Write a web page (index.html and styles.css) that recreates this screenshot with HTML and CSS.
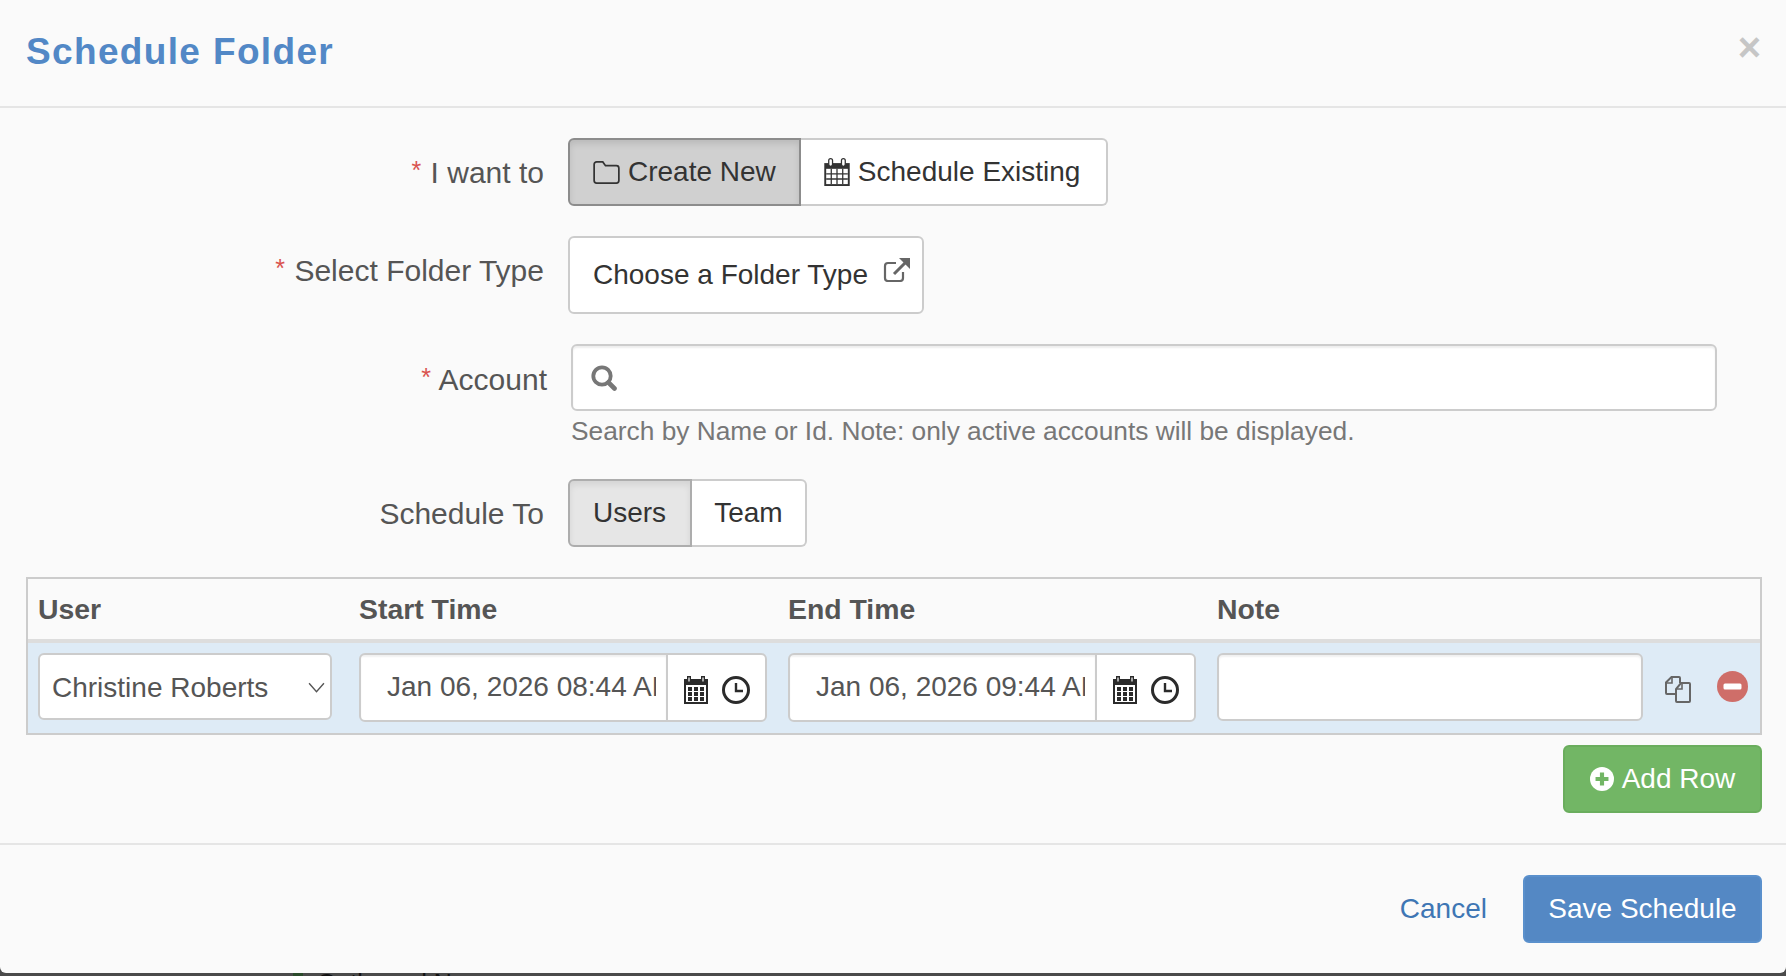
FILE: index.html
```html
<!DOCTYPE html>
<html lang="en">
<head>
<meta charset="utf-8">
<title>Schedule Folder</title>
<link rel="stylesheet" href="styles.css">
</head>
<body>
<div class="modal">
  <header class="modal-header">
    <h1 class="title">Schedule Folder</h1>
    <span class="close">&times;</span>
  </header>
  <main class="modal-body">
    <div class="form-row row-want">
      <label class="label"><span class="req">*</span> I want to</label>
      <div class="toggle">
        <span class="tbtn tbtn-dark">
          <svg class="ico" viewBox="1.2 3.700 21.600 18.600" width="27" height="23"><path d="M2 6.500a2 2 0 0 1 2-2h5l2.200 3H20a2 2 0 0 1 2 2v10a2 2 0 0 1-2 2H4a2 2 0 0 1-2-2z" fill="none" stroke="#333" stroke-width="1.400"/></svg>
          Create New</span>
        <span class="tbtn tbtn-wide">
          <svg class="ico" viewBox="2 1 20 22" width="26" height="28"><path d="M2 5h20v18H2z" fill="#333"/><path d="M3.500 9.500h17v12h-17z" fill="#fff"/><path d="M3.500 13.500h17M3.500 17.500h17M7.500 9.500v12M12 9.500v12M16.500 9.500v12" stroke="#333" stroke-width="1"/><rect x="5.500" y="1.500" width="3" height="6" rx="1.500" fill="#fff" stroke="#333"/><rect x="15.500" y="1.500" width="3" height="6" rx="1.500" fill="#fff" stroke="#333"/></svg>
          Schedule Existing</span>
      </div>
    </div>
    <div class="form-row row-type">
      <label class="label"><span class="req">*</span> Select Folder Type</label>
      <span class="choose">Choose a Folder Type
        <svg class="ext" viewBox="1 0 27 25" width="29" height="25"><path d="M20 15v6a3 3 0 0 1-3 3H5a3 3 0 0 1-3-3V9a3 3 0 0 1 3-3h8" fill="none" stroke="#666" stroke-width="2.200"/><path d="M11 17 24 4" stroke="#666" stroke-width="3"/><path d="M16 1h11v11z" fill="#666"/></svg>
      </span>
    </div>
    <div class="form-row row-account">
      <label class="label label-account"><span class="req">*</span> Account</label>
      <div class="account-col">
        <div class="search">
          <svg viewBox="0 0 26 26" width="26" height="26"><circle cx="11" cy="11" r="8.700" fill="none" stroke="#777" stroke-width="3.800"/><path d="m17.500 17.500 6 6" stroke="#777" stroke-width="4.600" stroke-linecap="round"/></svg>
        </div>
        <p class="help">Search by Name or Id. Note: only active accounts will be displayed.</p>
      </div>
    </div>
    <div class="form-row row-to">
      <label class="label">Schedule To</label>
      <div class="toggle">
        <span class="tbtn tbtn-light">Users</span>
        <span class="tbtn tbtn-team">Team</span>
      </div>
    </div>
    <div class="table">
      <div class="thead">
        <div class="c-user">User</div>
        <div class="c-start">Start Time</div>
        <div class="c-end">End Time</div>
        <div class="c-note">Note</div>
      </div>
      <div class="trow">
        <div class="c-user">
          <div class="select">Christine Roberts
            <svg viewBox="0 0 16 10" width="17" height="11"><path d="m1 1 7 8 7-8" fill="none" stroke="#555" stroke-width="1.300"/></svg>
          </div>
        </div>
        <div class="c-start">
          <div class="dt">
            <span class="dt-val"><span class="dt-text">Jan 06, 2026 08:44 AM</span></span>
            <span class="dt-ico">
              <svg viewBox="0 0 24 28" width="24" height="28"><path d="M0 3h24v25H0z" fill="#2b2b2b"/><path d="M2 9h20v17H2z" fill="#fff"/><path d="M4 11h4v4H4zM10 11h4v4h-4zM16 11h4v4h-4zM4 16h4v4H4zM10 16h4v4h-4zM16 16h4v4h-4zM4 21h4v4H4zM10 21h4v4h-4zM16 21h4v4h-4z" fill="#2b2b2b"/><path d="M3 0h4v5H3zM17 0h4v5h-4z" fill="#2b2b2b"/><path d="M4.400 1.400h1.200v4H4.400zM18.400 1.400h1.200v4h-1.200z" fill="#fff"/></svg>
              <svg viewBox="0 0 28 28" width="28" height="28"><circle cx="14" cy="14" r="12.500" fill="none" stroke="#2b2b2b" stroke-width="3"/><path d="M14 7v8h7" fill="none" stroke="#2b2b2b" stroke-width="2.400"/></svg>
            </span>
          </div>
        </div>
        <div class="c-end">
          <div class="dt">
            <span class="dt-val"><span class="dt-text">Jan 06, 2026 09:44 AM</span></span>
            <span class="dt-ico">
              <svg viewBox="0 0 24 28" width="24" height="28"><path d="M0 3h24v25H0z" fill="#2b2b2b"/><path d="M2 9h20v17H2z" fill="#fff"/><path d="M4 11h4v4H4zM10 11h4v4h-4zM16 11h4v4h-4zM4 16h4v4H4zM10 16h4v4h-4zM16 16h4v4h-4zM4 21h4v4H4zM10 21h4v4h-4zM16 21h4v4h-4z" fill="#2b2b2b"/><path d="M3 0h4v5H3zM17 0h4v5h-4z" fill="#2b2b2b"/><path d="M4.400 1.400h1.200v4H4.400zM18.400 1.400h1.200v4h-1.200z" fill="#fff"/></svg>
              <svg viewBox="0 0 28 28" width="28" height="28"><circle cx="14" cy="14" r="12.500" fill="none" stroke="#2b2b2b" stroke-width="3"/><path d="M14 7v8h7" fill="none" stroke="#2b2b2b" stroke-width="2.400"/></svg>
            </span>
          </div>
        </div>
        <div class="c-note"><div class="note"></div></div>
        <div class="c-acts">
          <svg viewBox="0 0 28 28" width="28" height="28"><path d="M12 19H3a1 1 0 0 1-1-1V7.500L7.500 2H15a1 1 0 0 1 1 1v5" fill="none" stroke="#666" stroke-width="2"/><path d="M2.500 8H8V2.500" fill="none" stroke="#666" stroke-width="1.600"/><path d="M17 8h8a1 1 0 0 1 1 1v17a1 1 0 0 1-1 1H13a1 1 0 0 1-1-1V14z" fill="none" stroke="#666" stroke-width="2"/><path d="M12.500 14H18V8.500" fill="none" stroke="#666" stroke-width="1.600"/></svg>
          <svg class="minus" viewBox="0 0 31 31" width="31" height="31"><circle cx="15.500" cy="15.500" r="15.500" fill="#cf6e69"/><rect x="6.500" y="12.500" width="18" height="6" rx="1.500" fill="#fff"/></svg>
        </div>
      </div>
    </div>
    <div class="add-wrap">
      <span class="btn btn-green">
        <svg viewBox="0 0 26 26" width="24" height="24"><circle cx="13" cy="13" r="13" fill="#fff"/><path d="M13 6v14M6 13h14" stroke="#72b665" stroke-width="4.500"/></svg>
        Add Row</span>
    </div>
  </main>
  <footer class="modal-footer">
    <a class="cancel">Cancel</a>
    <span class="btn btn-blue">Save Schedule</span>
  </footer>
</div>
<div class="backdrop">
  <span class="back-mark"></span>
  <span class="back-text">Outbound Name</span>
</div>
</body>
</html>
```
FILE: styles.css
```css
* { box-sizing: border-box; }
html, body { margin: 0; height: 976px; overflow: hidden; }
body {
  background: #4a4a4a;
  font-family: "Liberation Sans", Arial, sans-serif;
  font-size: 28px;
  color: #555;
}
.modal {
  height: 973px;
  background: #fafafa;
  border-radius: 0 0 6px 6px;
  display: flex;
  flex-direction: column;
}
.modal-header {
  height: 108px;
  flex: none;
  border-bottom: 2px solid #e5e5e5;
  padding: 0 25px 0 26px;
  display: flex;
  justify-content: space-between;
}
.title {
  margin: 34px 0 0;
  font-size: 37px;
  line-height: 36px;
  font-weight: 700;
  letter-spacing: 1.35px;
  color: #5288c6;
}
.close {
  font-size: 40px;
  line-height: 40px;
  margin-top: 27px;
  font-weight: 700;
  color: #c6c6c6;
}
.modal-body { padding: 0 24px 0 26px; flex: 1; }
.form-row { display: flex; align-items: flex-start; }
.row-want { margin-top: 30px; }
.row-type { margin-top: 30px; }
.row-account { margin-top: 30px; }
.label {
  width: 518px;
  height: 60px;
  text-align: right;
  font-size: 30px;
  line-height: 70px;
  flex: none;
  color: #555;
}
.label-account { width: 521px; line-height: 71px; }
.req { color: #d9534f; font-size: 25px; position: relative; top: -4px; margin-right: 1px; }
.toggle { display: flex; height: 68px; margin-left: 24px; }
.tbtn {
  display: flex;
  align-items: center;
  gap: 8px;
  padding: 0 23px;
  background: #fff;
  border: 2px solid #ccc;
  border-left: 0;
  border-radius: 0 6px 6px 0;
  color: #333;
  white-space: nowrap;
}
.tbtn-wide { padding-right: 26px; }
.tbtn-team { padding: 0 22px; }
.tbtn-dark, .tbtn-light {
  border-left: 2px solid;
  border-radius: 6px 0 0 6px;
  padding: 0 23px;
}
.tbtn-dark { background: #d0d0d0; border-color: #8c8c8c; box-shadow: inset 0 4px 6px rgba(0,0,0,.1); }
.tbtn-light { background: #e6e6e6; border-color: #adadad; box-shadow: inset 0 4px 6px rgba(0,0,0,.08); padding-right: 24px; }
.ico { flex: none; }
.choose {
  margin-left: 24px;
  width: 356px;
  height: 78px;
  display: flex;
  align-items: center;
  padding-left: 23px;
  background: #fff;
  border: 2px solid #ccc;
  border-radius: 6px;
  color: #333;
  white-space: nowrap;
  position: relative;
}
.ext { position: absolute; right: 10px; top: 19px; }
.account-col { margin-left: 24px; width: 1146px; }
.search {
  height: 67px;
  background: #fff;
  border: 2px solid #ccc;
  border-radius: 6px;
  box-shadow: inset 0 2px 2px rgba(0,0,0,.07);
  display: flex;
  align-items: center;
  padding-left: 18px;
}
.help { margin: 4px 0 0; font-size: 26.3px; line-height: 32px; color: #777; height: 64px; white-space: nowrap; }
.table { margin-top: 30px; border: 2px solid #ccc; }
.thead {
  display: grid;
  grid-template-columns: 321px 429px 429px 1fr;
  height: 60px;
  padding-left: 10px;
  align-items: center;
  font-size: 28.4px;
  font-weight: 700;
  color: #555;
}
.trow {
  display: grid;
  grid-template-columns: 321px 429px 429px 1fr;
  height: 94px;
  padding-left: 10px;
  padding-top: 10px;
  background: #deebf6;
  border-top: 4px solid #ddd;
  position: relative;
}
.select {
  width: 294px;
  height: 67px;
  background: #fff;
  border: 2px solid #ccc;
  border-radius: 6px;
  padding: 2px 5px 0 12px;
  display: flex;
  align-items: center;
  justify-content: space-between;
  white-space: nowrap;
}
.dt {
  width: 408px;
  height: 69px;
  background: #fff;
  border: 2px solid #ccc;
  border-radius: 6px;
  display: flex;
  overflow: hidden;
}
.dt-val {
  width: 307px;
  flex: none;
  padding: 0 10px 0 26px;
  line-height: 63px;
  border-right: 2px solid #ccc;
  box-shadow: inset 0 2px 2px rgba(0,0,0,.06);
}
.dt-text { display: block; overflow: hidden; white-space: nowrap; }
.dt-ico { display: flex; align-items: center; gap: 14px; padding: 4px 0 0 16px; }
.note {
  width: 426px;
  height: 68px;
  background: #fff;
  border: 2px solid #ccc;
  border-radius: 6px;
  box-shadow: inset 0 2px 2px rgba(0,0,0,.06);
}
.c-acts {
  position: absolute;
  right: 12px;
  top: 32px;
  display: flex;
  align-items: flex-start;
  gap: 25px;
}
.minus { margin-top: -4px; }
.add-wrap { display: flex; justify-content: flex-end; margin-top: 10px; }
.btn {
  display: inline-flex;
  align-items: center;
  justify-content: center;
  height: 68px;
  border-radius: 6px;
  color: #fff;
  white-space: nowrap;
}
.btn-green { width: 199px; gap: 8px; background: #72b665; border: 2px solid #6aad5d; }
.modal-footer {
  height: 130px;
  flex: none;
  border-top: 2px solid #e5e5e5;
  padding: 30px 24px 0 0;
  display: flex;
  justify-content: flex-end;
  align-items: flex-start;
  gap: 36px;
}
.cancel { line-height: 68px; color: #3e76b4; }
.btn-blue { width: 239px; background: #5488c4; border: 2px solid #5a90cc; }
.backdrop {
  height: 3px;
  overflow: hidden;
  display: flex;
  padding-left: 293px;
}
.back-mark { width: 10px; height: 3px; background: #2a4a2a; margin-right: 14px; flex: none; }
.back-text { font-size: 25px; line-height: 20px; color: #111; white-space: nowrap; }
```
